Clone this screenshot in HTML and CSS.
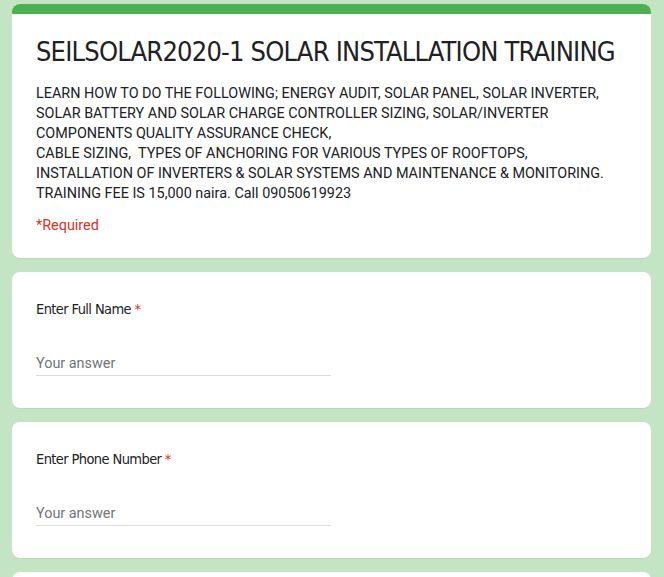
FILE: index.html
```html
<!DOCTYPE html>
<html>
<head>
<meta charset="utf-8">
<link rel="stylesheet" href="styles.css">
</head>
<body>
<div class="page">
  <div class="card header-card">
    <div class="bar"></div>
    <div class="header-body">
      <h1 class="form-title">SEILSOLAR2020-1 SOLAR INSTALLATION TRAINING</h1>
      <div class="desc">LEARN HOW TO DO THE FOLLOWING; ENERGY AUDIT, SOLAR PANEL, SOLAR INVERTER,<br>SOLAR BATTERY AND SOLAR CHARGE CONTROLLER SIZING, SOLAR/INVERTER<br>COMPONENTS QUALITY ASSURANCE CHECK,<br>CABLE SIZING,&nbsp; TYPES OF ANCHORING FOR VARIOUS TYPES OF ROOFTOPS,<br>INSTALLATION OF INVERTERS &amp; SOLAR SYSTEMS AND MAINTENANCE &amp; MONITORING.<br>TRAINING FEE IS 15,000 naira. Call 09050619923</div>
      <div class="required">*Required</div>
    </div>
  </div>
  <div class="card question">
    <div class="q-title">Enter Full Name <span class="star">*</span></div>
    <div class="answer">Your answer</div>
  </div>
  <div class="card question">
    <div class="q-title">Enter Phone Number <span class="star">*</span></div>
    <div class="answer">Your answer</div>
  </div>
  <div class="card question"></div>
</div>
</body>
</html>
```
FILE: styles.css
```css
html, body {
  margin: 0;
  padding: 0;
  background: #c3e5c4;
}
body {
  font-family: Roboto, "Liberation Sans", sans-serif;
  color: #202124;
  overflow: hidden;
  height: 577px;
}
.page {
  display: flex;
  flex-direction: column;
  gap: 14px;
  padding: 4px 13px 0 12px;
}
.card {
  background: #fff;
  border-radius: 8px;
  box-shadow: 0 1px 1px rgba(0,0,0,0.06);
}
.header-card {
  overflow: hidden;
}
.bar {
  height: 10px;
  background: #4caf50;
}
.header-body {
  padding: 19px 24px 22px 24px;
}
.form-title {
  margin: 0;
  font-family: "DejaVu Sans Condensed", "DejaVu Sans", sans-serif;
  font-weight: normal;
  font-size: 27px;
  line-height: 38px;
  color: #202124;
  letter-spacing: -0.8px;
  white-space: nowrap;
}
.desc {
  margin-top: 13px;
  font-size: 14.4px;
  line-height: 20px;
  color: #202124;
  white-space: nowrap;
}
.required {
  margin-top: 12px;
  font-size: 14.4px;
  line-height: 20px;
  color: #d93025;
}
.question {
  padding: 24px 24px 0 24px;
  height: 112px;
}
.q-title {
  font-family: "DejaVu Sans Condensed", "DejaVu Sans", sans-serif;
  font-size: 14.5px;
  line-height: 26px;
  letter-spacing: -0.6px;
  color: #202124;
}
.star {
  color: #d93025;
}
.answer {
  margin-top: 32px;
  width: 295px;
  font-size: 14.4px;
  line-height: 20px;
  padding-bottom: 1px;
  color: #70757a;
  border-bottom: 1px solid #dadce0;
}
```
